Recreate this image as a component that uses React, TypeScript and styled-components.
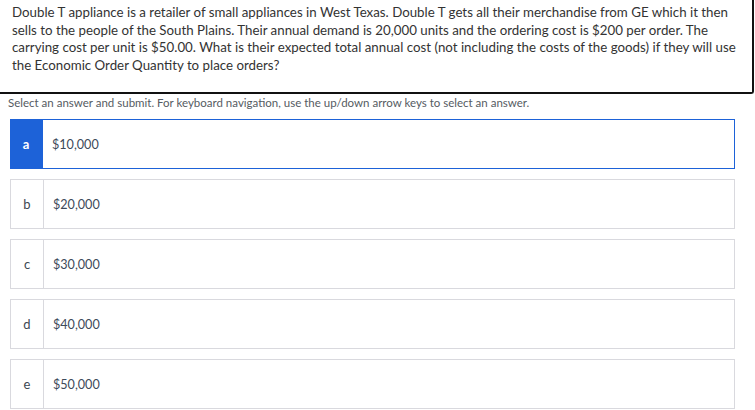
import React from 'react';
import styled, { createGlobalStyle } from 'styled-components';

const GlobalStyle = createGlobalStyle`
  html, body {
    margin: 0;
    padding: 0;
    background: #ffffff;
  }
  body {
    font-family: Lato, "Open Sans", sans-serif;
  }
`;

const Page = styled.div`
  width: 755px;
  height: 410px;
  overflow: hidden;
  background: #fff;
`;

const QuestionBox = styled.div`
  width: 754px;
  height: 94px;
  box-sizing: border-box;
  padding: 4px 12px 0 12px;
  border-right: 2px solid #111;
  border-bottom: 2px solid #111;
  border-bottom-right-radius: 3px;
  font-size: 13.3px;
  line-height: 17.7px;
  color: #333;
`;

const Line = styled.span`
  display: block;
  white-space: nowrap;
`;

const Hint = styled.div`
  padding: 1px 0 0 8px;
  height: 15px;
  font-size: 11.5px;
  line-height: 15px;
  color: #555b62;
`;

const Options = styled.div`
  display: flex;
  flex-direction: column;
  gap: 10px;
  padding: 9px 0 0 10px;
  width: 725px;
`;

const Option = styled.div<{ $selected?: boolean }>`
  display: flex;
  height: 50px;
  box-sizing: border-box;
  border: 1px solid ${p => (p.$selected ? '#1d62d8' : '#d9d9de')};
  background: #fff;
`;

const Letter = styled.div<{ $selected?: boolean }>`
  width: 32px;
  flex-shrink: 0;
  display: flex;
  align-items: center;
  justify-content: center;
  font-size: 13px;
  font-weight: ${p => (p.$selected ? 700 : 400)};
  color: ${p => (p.$selected ? '#fff' : '#3d4752')};
  background: ${p => (p.$selected ? '#1d62d8' : '#fff')};
  border-right: 1px solid ${p => (p.$selected ? '#1d62d8' : '#d9d9de')};
  margin: ${p => (p.$selected ? '-1px 0 -1px -1px' : '0')};
`;

const Answer = styled.div`
  display: flex;
  align-items: center;
  padding-left: 9px;
  font-size: 12.6px;
  color: #3d4a5a;
`;

const question = [
  'Double T appliance is a retailer of small appliances in West Texas. Double T gets all their merchandise from GE which it then',
  'sells to the people of the South Plains. Their annual demand is 20,000 units and the ordering cost is $200 per order. The',
  'carrying cost per unit is $50.00. What is their expected total annual cost (not including the costs of the goods) if they will use',
  'the Economic Order Quantity to place orders?',
];

const answers = [
  { key: 'a', text: '$10,000', selected: true },
  { key: 'b', text: '$20,000' },
  { key: 'c', text: '$30,000' },
  { key: 'd', text: '$40,000' },
  { key: 'e', text: '$50,000' },
];

export default function App() {
  return (
    <Page>
      <GlobalStyle />
      <QuestionBox>
        {question.map((l, i) => (
          <Line key={i}>{l}</Line>
        ))}
      </QuestionBox>
      <Hint>
        Select an answer and submit. For keyboard navigation, use the up/down arrow keys to select an answer.
      </Hint>
      <Options>
        {answers.map(a => (
          <Option key={a.key} $selected={a.selected}>
            <Letter $selected={a.selected}>{a.key}</Letter>
            <Answer>{a.text}</Answer>
          </Option>
        ))}
      </Options>
    </Page>
  );
}
